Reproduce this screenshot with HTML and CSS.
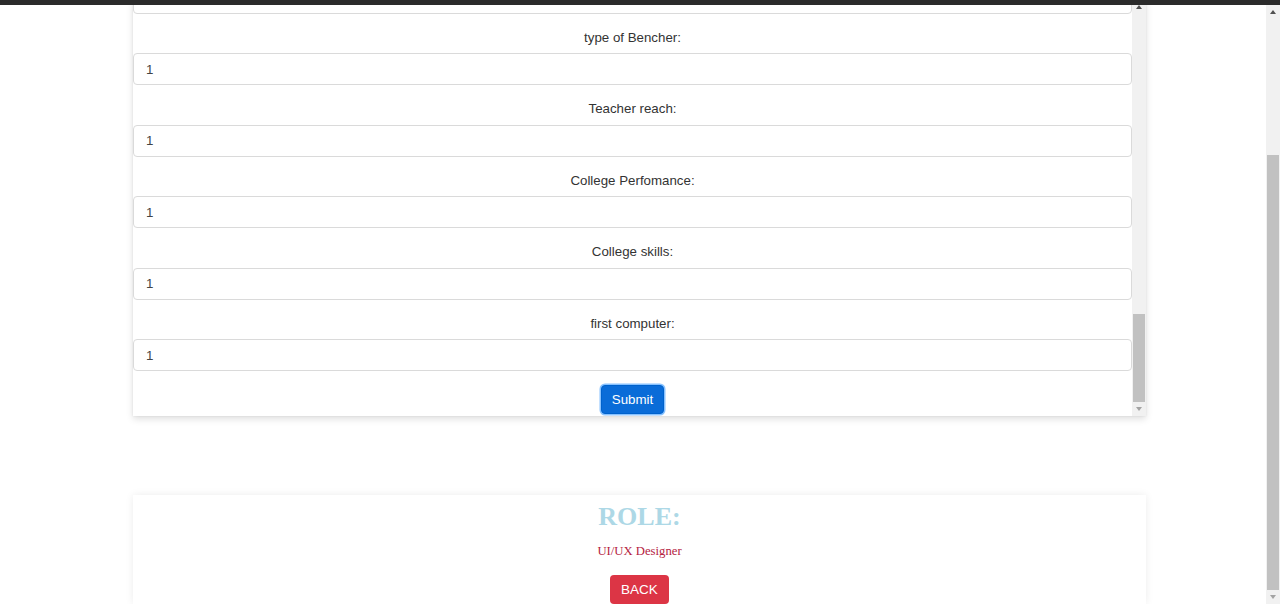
FILE: index.html
```html
<!DOCTYPE html>
<html lang="en">
<head>
<meta charset="utf-8">
<title>Career Prediction</title>
<link rel="stylesheet" href="styles.css">
</head>
<body>
<div class="topbar"></div>
<div class="window">
  <main class="viewport">
    <section class="card form-card">
      <div class="form-view">
        <form class="form" onsubmit="return false">
          <input class="field-input" value="1" aria-label="previous answer">
          <div class="field"><label class="field-label">type of Bencher:</label><input class="field-input" value="1"></div>
          <div class="field"><label class="field-label">Teacher reach:</label><input class="field-input" value="1"></div>
          <div class="field"><label class="field-label">College Perfomance:</label><input class="field-input" value="1"></div>
          <div class="field"><label class="field-label">College skills:</label><input class="field-input" value="1"></div>
          <div class="field"><label class="field-label">first computer:</label><input class="field-input" value="1"></div>
          <div class="actions"><button class="btn-submit" type="submit">Submit</button></div>
        </form>
      </div>
      <div class="vscroll">
        <div class="vscroll-btn"><span class="arrow-up"></span></div>
        <div class="vscroll-track"><div class="vscroll-thumb inner-thumb"></div></div>
        <div class="vscroll-btn"><span class="arrow-down"></span></div>
      </div>
    </section>
    <section class="card role-card">
      <h2 class="role-title">ROLE:</h2>
      <p class="role-name">UI/UX Designer</p>
      <a class="btn-back" href="#">BACK</a>
    </section>
  </main>
  <div class="vscroll page-scroll">
    <div class="vscroll-btn"><span class="arrow-up"></span></div>
    <div class="vscroll-track"><div class="vscroll-thumb page-thumb"></div></div>
    <div class="vscroll-btn"><span class="arrow-down"></span></div>
  </div>
</div>
</body>
</html>
```
FILE: styles.css
```css
html, body {
  margin: 0;
  height: 100%;
}

body {
  display: flex;
  flex-direction: column;
  overflow: hidden;
  background: #ffffff;
  font-family: "Liberation Sans", Arial, sans-serif;
  color: #333333;
}

.topbar {
  flex: none;
  height: 5px;
  background: #2b2b2b;
  position: relative;
  z-index: 2;
}

.window {
  flex: 1;
  min-height: 0;
  display: flex;
}

.viewport {
  flex: 1;
  min-width: 0;
  overflow: hidden;
  display: flex;
  flex-direction: column;
  justify-content: flex-end;
}

.card {
  flex: none;
  width: 1013px;
  margin-left: 133px;
  background: #ffffff;
}

/* form card */
.form-card {
  height: 416px;
  display: flex;
  margin-bottom: 79px;
  box-shadow: 0 3px 7px rgba(0, 0, 0, 0.13), 0 0 2px rgba(0, 0, 0, 0.08);
}

.form-view {
  flex: 1;
  min-width: 0;
  overflow: hidden;
  display: flex;
  flex-direction: column;
  justify-content: flex-end;
}

.form {
  flex: none;
  margin: 0;
}

.field-label {
  display: block;
  text-align: center;
  padding-top: 14px;
  margin-bottom: 5.5px;
  line-height: 20px;
  font-size: 13.3px;
  color: #333333;
}

.field-input {
  display: block;
  width: 100%;
  box-sizing: border-box;
  height: 32px;
  margin: 0;
  padding: 0 12px;
  border: 1px solid #dadada;
  border-radius: 4px;
  font-family: "Liberation Sans", Arial, sans-serif;
  font-size: 13.3px;
  color: #444444;
  background: #ffffff;
}

.actions {
  display: flex;
  justify-content: center;
  padding-top: 14px;
  padding-bottom: 2px;
}

.btn-submit {
  height: 29px;
  padding: 0 9.5px;
  border: 1px solid #0062cc;
  border-radius: 4px;
  background: #0a6cd8;
  color: #ffffff;
  font-family: "Liberation Sans", Arial, sans-serif;
  font-size: 13.3px;
  box-shadow: 0 0 0 1.5px rgba(38, 143, 255, 0.55);
}

/* role card */
.role-card {
  display: flex;
  flex-direction: column;
  align-items: center;
  padding-top: 7px;
  box-shadow: 0 0 8px rgba(0, 0, 0, 0.08);
}

.role-title {
  margin: 0;
  font-family: "Liberation Serif", "Times New Roman", serif;
  font-size: 26px;
  line-height: 29px;
  font-weight: bold;
  color: #add8e6;
}

.role-name {
  margin: 13px 0 0;
  font-family: "Liberation Serif", "Times New Roman", serif;
  font-size: 12.7px;
  line-height: 15px;
  color: #b5223f;
}

.btn-back {
  display: flex;
  align-items: center;
  height: 29px;
  margin-top: 16px;
  padding: 0 11px;
  border-radius: 4px;
  background: #dc3545;
  color: #ffffff;
  text-decoration: none;
  font-size: 13.5px;
}

/* scrollbars */
.vscroll {
  flex: none;
  width: 14px;
  display: flex;
  flex-direction: column;
  background: #f1f1f1;
}

.vscroll-btn {
  flex: none;
  height: 14px;
  display: flex;
  align-items: center;
  justify-content: center;
}

.arrow-up,
.arrow-down {
  width: 0;
  height: 0;
  border-left: 3.5px solid transparent;
  border-right: 3.5px solid transparent;
}

.arrow-up {
  border-bottom: 4px solid #505050;
}

.arrow-down {
  border-top: 4px solid #a3a3a3;
}

.vscroll-track {
  flex: 1;
  display: flex;
  flex-direction: column;
  justify-content: flex-end;
}

.vscroll-thumb {
  margin: 0 1px;
  background: #c1c1c1;
}

.inner-thumb {
  height: 88px;
}

.page-thumb {
  height: 435px;
}
```
